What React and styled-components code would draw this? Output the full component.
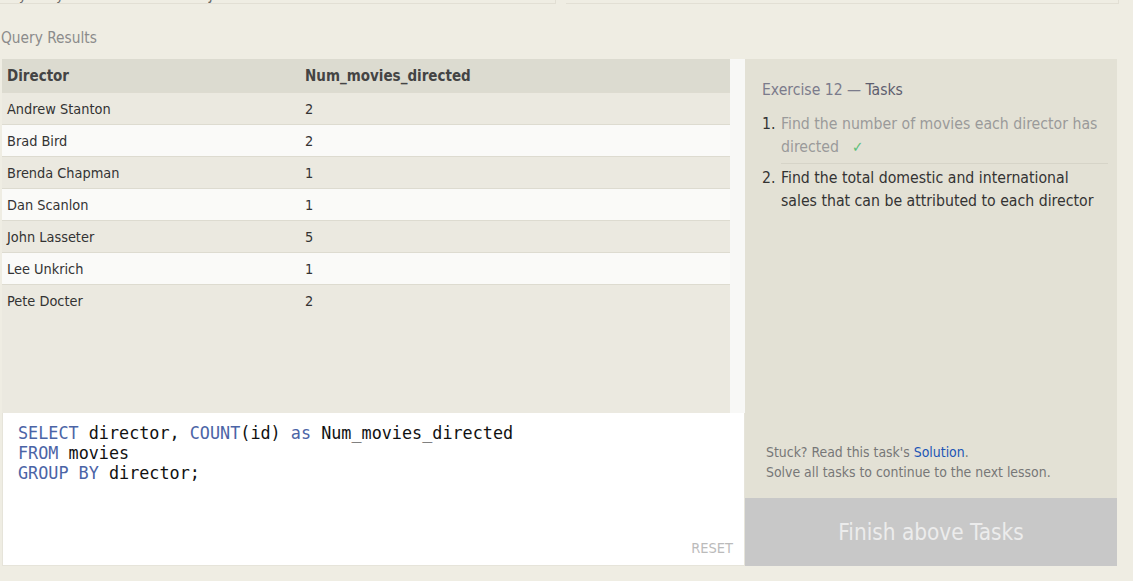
import styled, { createGlobalStyle } from 'styled-components';

const GlobalStyle = createGlobalStyle`
  body {
    margin: 0;
    background: #efede3;
    font-family: "DejaVu Sans Condensed", "DejaVu Sans", sans-serif;
    font-stretch: condensed;
    color: #333;
  }
`

const Page = styled.div`
  width: 1133px;
  height: 581px;
  overflow: hidden;
`

const TopStrip = styled.div`
  display: flex;
  gap: 10px;
  height: 4px;
`

const PrevTable = styled.div`
  width: ${p => p.w}px;
  height: 4px;
  overflow: hidden;
  display: flex;
  align-items: flex-end;
  border-right: 1px solid #e2dfd4;
  border-bottom: 1px solid #e2dfd4;
  box-sizing: border-box;
  font-size: 14px;
  line-height: 14px;
  color: #666;
`

const PrevCell = styled.span`
  width: ${p => p.w}px;
  flex: none;
  padding-left: 6px;
  margin-bottom: 1px;
  box-sizing: border-box;
`

const Caption = styled.div`
  padding: 24px 0 11px 1px;
  font-size: 15.3px;
  line-height: 20px;
  color: #8b8b8b;
`

const Main = styled.div`
  display: flex;
  margin-left: 2px;
  width: 1115px;
`

const LeftCol = styled.div`
  width: 743px;
  display: flex;
  flex-direction: column;
`

const Results = styled.div`
  height: 354px;
  display: flex;
`

const Table = styled.div`
  width: 728px;
  background: #ebe9e0;
`

const Scrollbar = styled.div`
  flex: 1;
  background: #f8f8f6;
`

const Row = styled.div`
  display: grid;
  grid-template-columns: 298px 1fr;
  height: ${p => (p.head ? 33 : 32)}px;
  padding-top: 1px;
  align-items: center;
  box-sizing: border-box;
  border-top: ${p => (p.head ? 'none' : '1px solid #dddbd0')};
  background: ${p => (p.head ? '#dcdbd0' : p.alt ? '#fafaf8' : '#ebe9e0')};
  font-size: ${p => (p.head ? 15 : 14.4)}px;
  font-weight: ${p => (p.head ? 'bold' : 'normal')};
  color: ${p => (p.head ? '#444' : '#333')};
`

const Cell = styled.span`
  padding-left: 5px;
`

const Editor = styled.div`
  height: 153px;
  background: #fff;
  border: 1px solid #e6e4da;
  border-top: none;
  box-sizing: border-box;
  display: flex;
  flex-direction: column;
`

const Code = styled.pre`
  flex: 1;
  margin: 0;
  padding: 10px 15px 0;
  font-family: "DejaVu Sans Mono", "Liberation Mono", monospace;
  font-size: 16.8px;
  line-height: 20px;
  color: #111;
`

const Kw = styled.span`
  color: #4b64a6;
`

const Reset = styled.span`
  align-self: flex-end;
  padding: 0 11px 9px 0;
  font-size: 14.5px;
  line-height: 16px;
  color: #bbbbbb;
`

const RightCol = styled.div`
  flex: 1;
  display: flex;
  flex-direction: column;
`

const Tasks = styled.div`
  flex: 1;
  background: #e3e1d5;
  padding: 20px 9px 16px 17px;
  display: flex;
  flex-direction: column;
`

const Heading = styled.div`
  font-size: 15.6px;
  line-height: 22px;
  color: #7b7b8b;

  b {
    font-weight: normal;
    color: #5e5e6e;
  }
`

const List = styled.div`
  margin-top: 11px;
  display: flex;
  flex-direction: column;
`

const Item = styled.div`
  display: grid;
  grid-template-columns: 19px 1fr;
  font-size: 15.7px;
  line-height: 23px;
`

const Num = styled.span`
  color: #333;
  padding-top: ${p => (p.first ? 0 : 2)}px;
`

const ItemText = styled.span`
  color: ${p => (p.done ? '#9a9a9a' : '#333')};
  padding: ${p => (p.done ? '0 0 4px' : '2px 0 0')};
  border-bottom: ${p => (p.done ? '1px solid #d6d4c8' : 'none')};
`

const Check = styled.span`
  color: #5cbf7a;
  margin-left: 13px;
  font-size: 15px;
`

const Footer = styled.div`
  margin-top: auto;
  padding-left: 4px;
  font-size: 13.9px;
  line-height: 20px;
  color: #777;

  a {
    color: #1c55b5;
    text-decoration: none;
  }
`

const FinishButton = styled.div`
  height: 68px;
  background: #c8c8c8;
  display: flex;
  align-items: center;
  justify-content: center;
  font-size: 22.4px;
  color: #ececec;
`

const results = [
  ['Andrew Stanton', 2],
  ['Brad Bird', 2],
  ['Brenda Chapman', 1],
  ['Dan Scanlon', 1],
  ['John Lasseter', 5],
  ['Lee Unkrich', 1],
  ['Pete Docter', 2],
]

export default function App() {
  return (
    <Page>
      <GlobalStyle />
      <TopStrip>
        <PrevTable w={556}>
          <PrevCell w={203}>Toy Story</PrevCell>
          <PrevCell w={145}>John Lasseter</PrevCell>
          <PrevCell w={65}>2006</PrevCell>
          <PrevCell w={80}>117</PrevCell>
        </PrevTable>
        <PrevTable w={553}>
          <PrevCell w={106}>8</PrevCell>
          <PrevCell w={75}>8.5</PrevCell>
          <PrevCell w={166}>223808164</PrevCell>
          <PrevCell w={120}>297503696</PrevCell>
        </PrevTable>
      </TopStrip>

      <Caption>Query Results</Caption>

      <Main>
        <LeftCol>
          <Results>
            <Table>
              <Row head>
                <Cell>Director</Cell>
                <Cell>Num_movies_directed</Cell>
              </Row>
              {results.map(([name, n], i) => (
                <Row key={name} alt={i % 2 === 1}>
                  <Cell>{name}</Cell>
                  <Cell>{n}</Cell>
                </Row>
              ))}
            </Table>
            <Scrollbar />
          </Results>
          <Editor>
            <Code>
              <Kw>SELECT</Kw> director, <Kw>COUNT</Kw>(id) <Kw>as</Kw> Num_movies_directed{'\n'}
              <Kw>FROM</Kw> movies{'\n'}
              <Kw>GROUP BY</Kw> director;
            </Code>
            <Reset>RESET</Reset>
          </Editor>
        </LeftCol>

        <RightCol>
          <Tasks>
            <Heading>Exercise 12 — <b>Tasks</b></Heading>
            <List>
              <Item>
                <Num first>1.</Num>
                <ItemText done>
                  Find the number of movies each director has directed<Check>✓</Check>
                </ItemText>
              </Item>
              <Item>
                <Num>2.</Num>
                <ItemText>Find the total domestic and international sales that can be attributed to each director</ItemText>
              </Item>
            </List>
            <Footer>
              Stuck? Read this task's <a href="#">Solution</a>.<br />
              Solve all tasks to continue to the next lesson.
            </Footer>
          </Tasks>
          <FinishButton>Finish above Tasks</FinishButton>
        </RightCol>
      </Main>
    </Page>
  )
}
